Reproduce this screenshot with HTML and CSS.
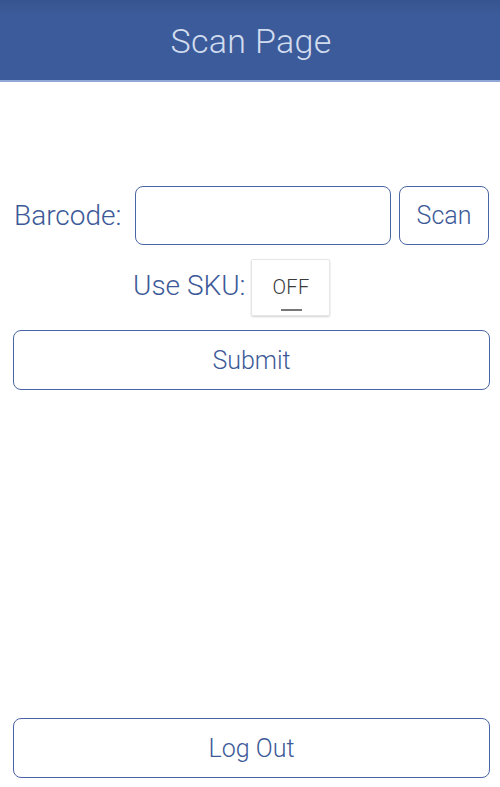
FILE: index.html
```html
<!DOCTYPE html>
<html>
<head>
<meta charset="utf-8">
<link rel="stylesheet" href="styles.css">
</head>
<body>
<div class="app">
  <header class="header"><h1 class="title">Scan Page</h1></header>
  <main class="content">
    <div class="row-barcode">
      <label class="label label-barcode">Barcode:</label>
      <div class="input"></div>
      <button class="btn btn-scan">Scan</button>
    </div>
    <div class="row-sku">
      <label class="label">Use SKU:</label>
      <div class="toggle"><span class="toggle-text">OFF</span><span class="toggle-bar"></span></div>
    </div>
    <button class="btn btn-wide">Submit</button>
    <button class="btn btn-wide btn-logout">Log Out</button>
  </main>
</div>
</body>
</html>
```
FILE: styles.css
```css
html, body { margin: 0; padding: 0; background: #fff; }
body { font-family: Roboto, "Noto Sans", sans-serif; }
.app { height: 787px; display: flex; flex-direction: column; }
.header {
  height: 80px;
  background: linear-gradient(#36558f, #3c5b9a 20%, #3c5b9a);
  border-bottom: 2px solid #8fa8d8;
  display: flex; align-items: center; justify-content: center;
}
.title {
  margin: 0; font-weight: 300; font-size: 34px; color: #d2dcef;
  letter-spacing: 0.3px; position: relative; top: 1px; left: 1px;
}
.content { flex: 1; display: flex; flex-direction: column; padding: 0 11px 9px 13px; }
.label { font-weight: 300; font-size: 28px; color: #3d5a98; white-space: nowrap; }
.row-barcode { display: flex; align-items: center; margin-top: 104px; height: 59px; }
.label-barcode { margin-left: 1px; width: 121px; }
.input {
  width: 254px; height: 57px; border: 1px solid #4a65a3; border-radius: 8px; box-sizing: content-box;
}
.btn {
  font-family: Roboto, "Noto Sans", sans-serif; font-weight: 300; font-size: 25px; color: #3d5a98;
  background: #fff; border: 1px solid #4a65a3; border-radius: 8px; padding: 0; cursor: pointer;
}
.btn-scan { width: 90px; height: 59px; margin-left: 8px; font-size: 25px; }
.row-sku { display: flex; align-items: center; margin-top: 14px; height: 57px; padding-left: 120px; }
.row-sku .label { margin-right: 6px; position: relative; top: -2px; }
.toggle {
  width: 79px; height: 57px; border: 1px solid #e6e6e6; border-radius: 2px;
  box-shadow: 0 1px 2px rgba(0,0,0,0.18); position: relative;
  display: flex; justify-content: center; align-items: center; box-sizing: border-box;
}
.toggle-text { font-size: 20px; color: #3a3a3a; font-weight: 300; position: relative; top: -1px; letter-spacing: 0.3px; }
.toggle-bar { position: absolute; left: 29px; bottom: 4px; width: 21px; height: 2px; background: #777; }
.btn-wide { width: 477px; height: 60px; margin-top: 14px; }
.btn-logout { margin-top: auto; }
```
